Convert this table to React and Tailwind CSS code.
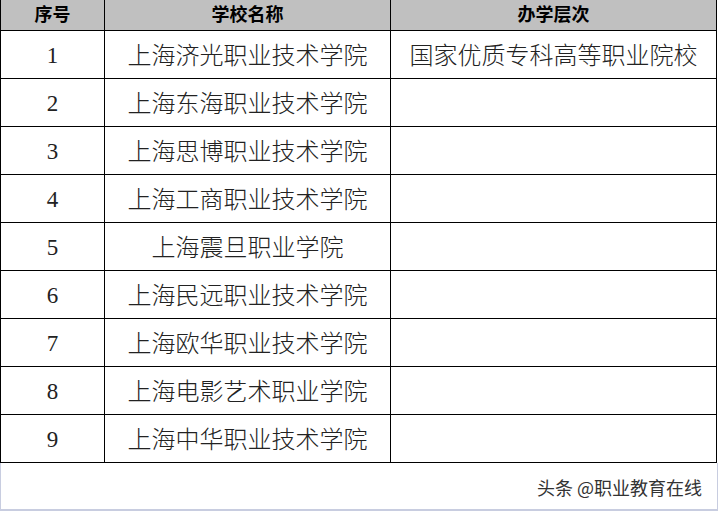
import React from "react";

const rows = [
  ["1", "上海济光职业技术学院", "国家优质专科高等职业院校"],
  ["2", "上海东海职业技术学院", ""],
  ["3", "上海思博职业技术学院", ""],
  ["4", "上海工商职业技术学院", ""],
  ["5", "上海震旦职业学院", ""],
  ["6", "上海民远职业技术学院", ""],
  ["7", "上海欧华职业技术学院", ""],
  ["8", "上海电影艺术职业学院", ""],
  ["9", "上海中华职业技术学院", ""],
];

export default function App() {
  return (
    <div
      className="w-[718px] h-[511px] bg-white flex flex-col overflow-hidden"
      style={{ fontFamily: '"Liberation Serif", "Noto Sans CJK SC", serif' }}
    >
      <div className="w-[717px] border-l border-r border-black">
        <div className="flex h-[31px] bg-[#c0c0c0] border-b border-black text-[18px] font-bold text-black">
          <div className="w-[104px] flex items-center justify-center border-r border-black">序号</div>
          <div className="w-[286px] flex items-center justify-center border-r border-black">学校名称</div>
          <div className="flex-1 flex items-center justify-center">办学层次</div>
        </div>
        {rows.map((r) => (
          <div key={r[0]} className="flex h-[48px] border-b border-black text-[24px] text-[#222] font-light">
            <div className="w-[104px] flex items-center justify-center pt-[3px] border-r border-black text-[23px] font-normal">{r[0]}</div>
            <div className="w-[286px] flex items-center justify-center pt-[3px] border-r border-black">{r[1]}</div>
            <div className="flex-1 flex items-center justify-center pt-[3px]">{r[2]}</div>
          </div>
        ))}
      </div>
      <div className="flex-1 w-[718px] border-l border-r border-b-2 border-[#c8cde0] flex items-center justify-end pr-[15px] pt-[2px]">
        <span
          className="text-[18px] text-[#333]"
          style={{ fontFamily: '"Noto Sans CJK SC", "Noto Sans", sans-serif' }}
        >
          头条 @职业教育在线
        </span>
      </div>
    </div>
  );
}
